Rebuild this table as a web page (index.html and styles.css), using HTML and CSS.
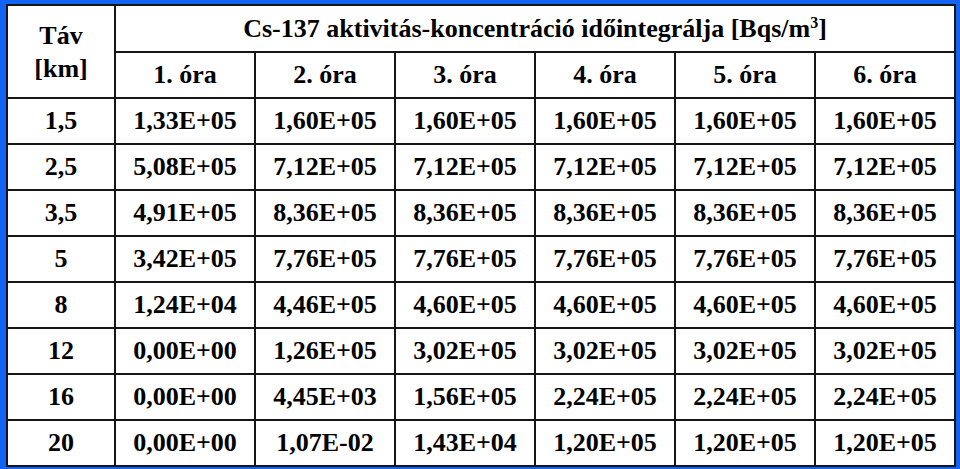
FILE: index.html
```html
<!DOCTYPE html>
<html lang="hu">
<head>
<meta charset="utf-8">
<link rel="stylesheet" href="styles.css">
</head>
<body>
<div class="frame">
<table class="data">
<colgroup>
<col class="c0"><col class="c"><col class="c"><col class="c"><col class="c"><col class="c"><col class="c">
</colgroup>
<thead>
<tr class="h1">
<th rowspan="2" class="dist">Táv<br>[km]</th>
<th colspan="6">Cs-137 aktivitás-koncentráció időintegrálja [Bqs/m<sup>3</sup>]</th>
</tr>
<tr class="h2">
<th>1. óra</th><th>2. óra</th><th>3. óra</th><th>4. óra</th><th>5. óra</th><th>6. óra</th>
</tr>
</thead>
<tbody>
<tr><td>1,5</td><td>1,33E+05</td><td>1,60E+05</td><td>1,60E+05</td><td>1,60E+05</td><td>1,60E+05</td><td>1,60E+05</td></tr>
<tr><td>2,5</td><td>5,08E+05</td><td>7,12E+05</td><td>7,12E+05</td><td>7,12E+05</td><td>7,12E+05</td><td>7,12E+05</td></tr>
<tr><td>3,5</td><td>4,91E+05</td><td>8,36E+05</td><td>8,36E+05</td><td>8,36E+05</td><td>8,36E+05</td><td>8,36E+05</td></tr>
<tr><td>5</td><td>3,42E+05</td><td>7,76E+05</td><td>7,76E+05</td><td>7,76E+05</td><td>7,76E+05</td><td>7,76E+05</td></tr>
<tr><td>8</td><td>1,24E+04</td><td>4,46E+05</td><td>4,60E+05</td><td>4,60E+05</td><td>4,60E+05</td><td>4,60E+05</td></tr>
<tr><td>12</td><td>0,00E+00</td><td>1,26E+05</td><td>3,02E+05</td><td>3,02E+05</td><td>3,02E+05</td><td>3,02E+05</td></tr>
<tr><td>16</td><td>0,00E+00</td><td>4,45E+03</td><td>1,56E+05</td><td>2,24E+05</td><td>2,24E+05</td><td>2,24E+05</td></tr>
<tr><td>20</td><td>0,00E+00</td><td>1,07E-02</td><td>1,43E+04</td><td>1,20E+05</td><td>1,20E+05</td><td>1,20E+05</td></tr>
</tbody>
</table>
</div>
</body>
</html>
```

FILE: styles.css
```css
html, body {
  margin: 0;
  padding: 0;
  background: #1464f4;
}
.frame {
  width: 960px;
  height: 469px;
  box-sizing: border-box;
  padding: 4px 7px 4px 6px;
  background: #1464f4;
}
.data {
  width: 947px;
  border-collapse: collapse;
  table-layout: fixed;
  background: #ffffff;
  font-family: "Liberation Serif", "Times New Roman", serif;
  font-weight: 700;
  font-size: 26px;
  color: #000;
}
.c0 { width: 108px; }
.c { width: 140px; }
.data th, .data td {
  border: 2px solid #161616;
  padding: 0;
  text-align: center;
  vertical-align: middle;
  font-weight: 700;
  height: 46px;
  box-sizing: border-box;
  line-height: 28px;
}
.data .h1 th { height: 47px; }
.data th.dist { line-height: 33px; }
.data sup {
  font-size: 16px;
  line-height: 0;
  vertical-align: 9px;
}
```
